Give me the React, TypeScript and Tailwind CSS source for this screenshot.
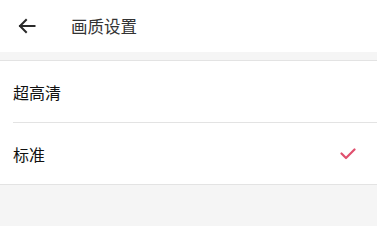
export default function App() {
  const font = { fontFamily: '"Noto Sans CJK SC", "Noto Sans", sans-serif' };
  return (
    <div className="w-[383px] h-[226px] bg-white" style={font}>
      <div className="w-[377px] h-[226px] bg-[#f5f5f5] flex flex-col">
        <div className="h-[52px] bg-white flex items-center">
          <div className="w-[52px] flex justify-center pl-[1px]">
            <svg width="18" height="16" viewBox="0 0 18 16" fill="none" stroke="#2a2a2a" strokeWidth="2" strokeLinecap="square">
              <path d="M16.5 8H2" />
              <path d="M8 2L2 8L8 14" />
            </svg>
          </div>
          <div className="ml-[19px] text-[16.5px] text-[#333] leading-none">画质设置</div>
        </div>
        <div className="h-[8px]" />
        <div className="bg-white border-t border-b border-[#e3e3e3]">
          <div className="h-[61px] flex items-center pl-[13px] text-[16px] text-[#111]">超高清</div>
          <div className="ml-[13px] h-px bg-[#e3e3e3]" />
          <div className="h-[61px] flex items-center justify-between pl-[13px] pr-[21px] text-[16px] text-[#111]">
            <span>标准</span>
            <svg width="16" height="12" viewBox="0 0 16 12" fill="none" stroke="#e0506e" strokeWidth="2.2" strokeLinecap="round" strokeLinejoin="round">
              <path d="M1.5 5.5L6 10L14.5 1.5" />
            </svg>
          </div>
        </div>
      </div>
    </div>
  );
}
